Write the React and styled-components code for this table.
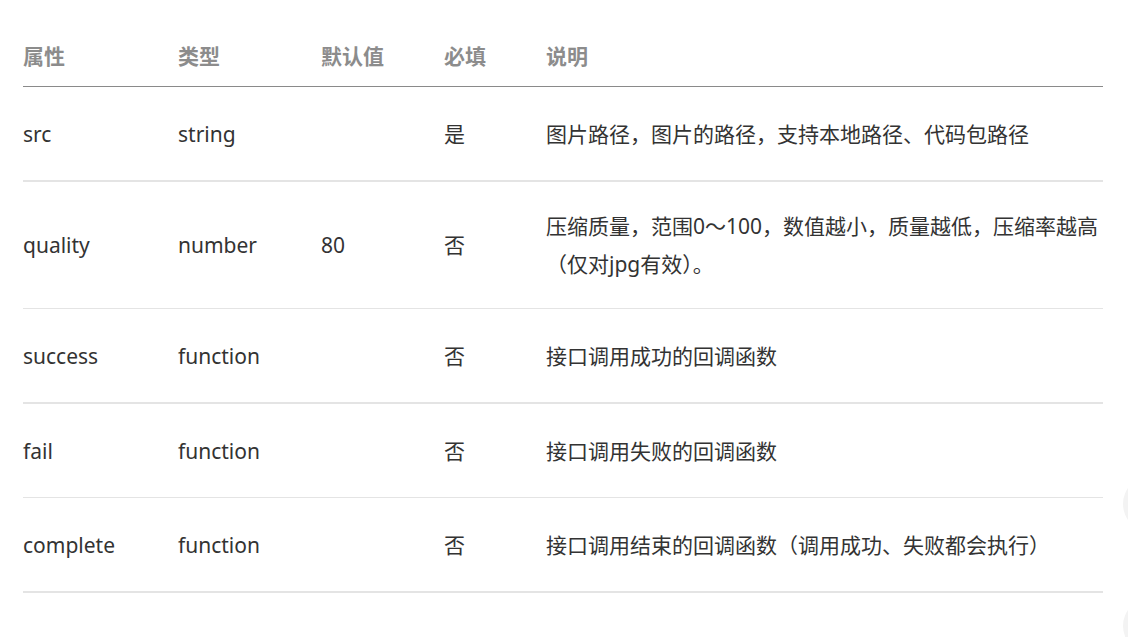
import React from "react";
import styled, { createGlobalStyle } from "styled-components";

const rows = [
	{ name: "src", type: "string", def: "", req: "是", desc: "图片路径，图片的路径，支持本地路径、代码包路径", thick: true },
	{
		name: "quality",
		type: "number",
		def: "80",
		req: "否",
		desc: "压缩质量，范围0～100，数值越小，质量越低，压缩率越高（仅对jpg有效）。",
	},
	{ name: "success", type: "function", def: "", req: "否", desc: "接口调用成功的回调函数", thick: true },
	{ name: "fail", type: "function", def: "", req: "否", desc: "接口调用失败的回调函数" },
	{
		name: "complete",
		type: "function",
		def: "",
		req: "否",
		desc: "接口调用结束的回调函数（调用成功、失败都会执行）",
		thick: true,
	},
];

const App = () => {
	return (
		<Page>
			<GlobalStyle />
			<Table>
				<Head>
					<HeadCell>属性</HeadCell>
					<HeadCell>类型</HeadCell>
					<HeadCell>默认值</HeadCell>
					<HeadCell>必填</HeadCell>
					<HeadCell>说明</HeadCell>
				</Head>
				{rows.map((r) => (
					<Row key={r.name} thick={r.thick}>
						<Cell>{r.name}</Cell>
						<Cell>{r.type}</Cell>
						<Cell>{r.def}</Cell>
						<Cell>{r.req}</Cell>
						<Cell>{r.desc}</Cell>
					</Row>
				))}
			</Table>
			<Floater top={476} />
			<Floater top={598} />
		</Page>
	);
};

// styled-components
const GlobalStyle = createGlobalStyle`
	body {
		margin: 0;
		background: #fff;
		font-family: "Noto Sans", "Noto Sans CJK SC", sans-serif;
	}
`;
const Page = styled.div`
	position: relative;
	height: 637px;
	overflow: hidden;
	padding: 0 25px 0 23px;
`;
const Table = styled.div`
	display: flex;
	flex-direction: column;
`;
const cols = "155px 143px 123px 102px 1fr";
const Head = styled.div`
	display: grid;
	grid-template-columns: ${cols};
	border-bottom: 1px solid #8a8a8a;
`;
const HeadCell = styled.div`
	padding: 37px 0 11px;
	line-height: 38px;
	font-size: 21px;
	font-weight: 700;
	color: #8c8c8c;
`;
const Row = styled.div`
	display: grid;
	grid-template-columns: ${cols};
	align-items: center;
	min-height: 93px;
	border-bottom: ${(p) => (p.thick ? "2px" : "1px")} solid #e4e4e4;
`;
const Cell = styled.div`
	padding: 25px 0;
	line-height: 38px;
	font-size: 21px;
	color: #333;
`;
const Floater = styled.div`
	position: absolute;
	left: 1123px;
	top: ${(p) => p.top}px;
	width: 56px;
	height: 56px;
	border-radius: 50%;
	background: #f3f3f3;
`;

export default App;
